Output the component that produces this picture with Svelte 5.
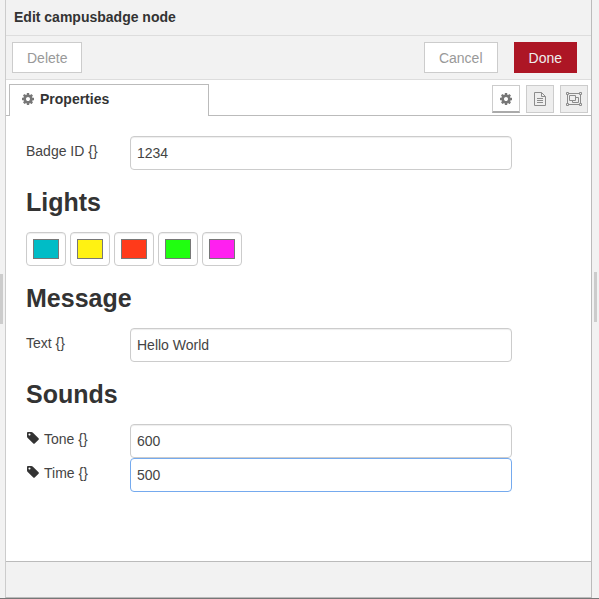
<script>
  const gear =
    'M1152 896q0-106-75-181t-181-75-181 75-75 181 75 181 181 75 181-75 75-181zm512-109v222q0 12-8 23t-20 13l-185 28q-19 54-39 91 35 50 107 138 10 12 10 25t-9 23q-27 37-99 108t-94 71q-12 0-26-9l-138-108q-44 23-91 38-16 136-29 186-7 28-36 28h-222q-14 0-24.5-8.5t-11.5-21.5l-28-184q-49-16-90-37l-141 107q-10 9-25 9-14 0-25-11-126-114-165-168-7-10-7-23 0-12 8-23 15-21 51-66.5t54-70.5q-27-50-41-99l-183-27q-13-2-21-12.5t-8-23.5v-222q0-12 8-23t19-13l186-28q14-46 39-92-40-57-107-138-10-12-10-24 0-10 9-23 26-36 98.5-107.5t94.5-71.5q13 0 26 10l138 107q44-23 91-38 16-136 29-186 7-28 36-28h222q14 0 24.5 8.5t11.5 21.5l28 184q49 16 90 37l142-107q9-9 24-9 13 0 25 10 129 119 165 170 7 8 7 22 0 12-8 23-15 21-51 66.5t-54 70.5q26 50 41 98l183 28q13 2 21 12.5t8 23.5z';
  const tag =
    'M576 448q0-53-37.5-90.5t-90.5-37.5-90.5 37.5-37.5 90.5 37.5 90.5 90.5 37.5 90.5-37.5 37.5-90.5zm1067 576q0 53-37 90l-491 492q-39 37-91 37-53 0-90-37l-715-716q-38-37-64.5-101t-26.5-117v-416q0-52 38-90t90-38h416q53 0 117 26.5t102 64.5l715 714q37 39 37 91z';

  let badgeId = $state('1234');
  let message = $state('Hello World');
  let tone = $state('600');
  let time = $state('500');
  let lights = $state(['#00bcc6', '#fff212', '#ff3a1a', '#20ff10', '#ff20f0']);
</script>

{#snippet row(id, label, icon, get, set, active)}
  <div class="form-row">
    <label for={id}>
      {#if icon}
        <svg class="tag" viewBox="0 0 1792 1792" aria-hidden="true"><path d={icon} /></svg>
      {/if}
      <span>{label}</span>
    </label>
    <input {id} type="text" class:active bind:value={get, set} />
  </div>
{/snippet}

<div class="workspace">
  <div class="separator"><i></i></div>
  <main class="tray">
    <header>Edit campusbadge node</header>
    <div class="toolbar">
      <button type="button">Delete</button>
      <div class="confirm">
        <button type="button">Cancel</button>
        <button type="button" class="primary">Done</button>
      </div>
    </div>

    <div class="tabs">
      <button type="button" class="tab">
        <svg class="cog" viewBox="0 0 1792 1792" aria-hidden="true"><path d={gear} /></svg>
        <span>Properties</span>
      </button>
      <div class="tab-tools">
        <button type="button" class="tool selected" aria-label="Properties">
          <svg class="cog" viewBox="0 0 1792 1792" aria-hidden="true"><path d={gear} /></svg>
        </button>
        <button type="button" class="tool" aria-label="Description">
          <svg class="file" viewBox="0 0 12 14" aria-hidden="true">
            <path d="M.5 .5H7.5L11.5 4.5V13.5H.5ZM7.5 .5V4.5H11.5M3 6.5H9M3 8.5H9M3 10.5H9" />
          </svg>
        </button>
        <button type="button" class="tool" aria-label="Appearance">
          <svg class="group" viewBox="0 0 16 14" aria-hidden="true">
            <path d="M3 1.5H13M3 12.5H13M1.5 3V11M14.5 3V11" />
            <path d="M.5 .5H2.5V2.5H.5ZM13.5 .5H15.5V2.5H13.5ZM.5 11.5H2.5V13.5H.5ZM13.5 11.5H15.5V13.5H13.5Z" />
            <path d="M3.5 3.5H9.5V8.5H3.5ZM9.5 5.5H12.5V10.5H6.5V8.5" />
          </svg>
        </button>
      </div>
    </div>

    <form>
      {@render row('badge-id', 'Badge ID {}', null, () => badgeId, (v) => (badgeId = v), false)}

      <h3>Lights</h3>
      <div class="lights">
        {#each lights as _, i}
          <input type="color" aria-label={`Light ${i + 1}`} bind:value={lights[i]} />
        {/each}
      </div>

      <h3>Message</h3>
      {@render row('text', 'Text {}', null, () => message, (v) => (message = v), false)}

      <h3>Sounds</h3>
      {@render row('tone', 'Tone {}', tag, () => tone, (v) => (tone = v), false)}
      {@render row('time', 'Time {}', tag, () => time, (v) => (time = v), true)}
    </form>

    <footer></footer>
  </main>
  <div class="separator right"><i></i></div>
</div>

<style>
  :global(body) {
    margin: 0;
  }

  .workspace {
    box-sizing: border-box;
    min-height: 100vh;
    display: flex;
    background: #f2f2f2;
    border-bottom: 1px solid #777;
    font: 14px/20px 'Liberation Sans', Helvetica, Arial, sans-serif;
    color: #444;
  }

  .workspace * {
    box-sizing: border-box;
  }

  .separator {
    width: 5px;
    display: flex;
    align-items: center;
  }

  .separator.right {
    width: 7px;
    padding: 0 2px 4px;
  }

  .separator i {
    width: 3px;
    height: 50px;
    background: #ccc;
  }

  .tray {
    flex: 1;
    min-width: 0;
    display: flex;
    flex-direction: column;
    border: 1px solid #bbb;
    border-top: 0;
    border-left-color: #ccc;
    background: #fff;
  }

  header {
    padding: 7px 8px 8px;
    background: #f2f2f2;
    border-bottom: 1px solid #ddd;
    font-weight: bold;
    color: #333;
  }

  .toolbar {
    display: flex;
    justify-content: space-between;
    padding: 6px 14px 6px 6px;
    background: #f2f2f2;
    border-bottom: 1px solid #ddd;
  }

  .confirm {
    display: flex;
    gap: 16px;
  }

  button {
    font: inherit;
    cursor: pointer;
  }

  .toolbar button {
    height: 31px;
    padding: 0 14px;
    border: 1px solid #ccc;
    background: #fff;
    color: #999;
  }

  .toolbar .primary {
    border-color: #ad1625;
    background: #ad1625;
    color: #eee;
  }

  .tabs {
    display: flex;
    justify-content: space-between;
    height: 36px;
    padding: 4px 3px 0;
    box-shadow: inset 0 -1px #bbb;
  }

  .tab {
    display: flex;
    align-items: center;
    gap: 5px;
    width: 200px;
    padding: 0 11px 4px;
    border: 1px solid #bbb;
    border-bottom: 0;
    background: #fff;
    font-weight: bold;
    color: #333;
  }

  .cog {
    width: 14px;
    height: 14px;
    fill: #777;
  }

  .tab-tools {
    display: flex;
    gap: 6px;
    padding-top: 1px;
  }

  .tool {
    display: flex;
    align-items: center;
    justify-content: center;
    width: 28px;
    height: 28px;
    padding: 0;
    border: 1px solid #ccc;
    background: #eee;
  }

  .tool.selected {
    border-bottom: 2px solid #aaa;
    background: #fff;
  }

  .file,
  .group {
    height: 14px;
    fill: none;
    stroke: #8c8c8c;
  }

  .file {
    width: 12px;
  }

  .group {
    width: 16px;
  }

  form {
    flex: 1;
    padding: 20px;
  }

  .form-row {
    display: flex;
  }

  label {
    display: flex;
    gap: 4px;
    width: 104px;
    padding: 5px 0;
  }

  .tag {
    width: 14px;
    height: 14px;
    margin-top: 2px;
    fill: #333;
  }

  input[type='text'] {
    width: 70%;
    height: 34px;
    padding: 0 6px;
    border: 1px solid #ccc;
    border-radius: 4px;
    background: #fff;
    box-shadow: inset 0 1px 1px #eee;
    font: inherit;
    color: #444;
    outline: none;
  }

  input[type='text'].active,
  input[type='text']:focus {
    border-color: #75aaee;
    box-shadow: none;
  }

  h3 {
    margin: 12px 0 10px;
    font-size: 25px;
    line-height: 40px;
    color: #333;
  }

  .lights {
    display: flex;
    gap: 4px;
  }

  input[type='color'] {
    appearance: none;
    width: 40px;
    height: 34px;
    padding: 6px;
    border: 1px solid #ccc;
    border-radius: 4px;
    background: #fff;
    box-shadow: inset 0 1px 1px #eee;
  }

  input[type='color']::-webkit-color-swatch-wrapper {
    padding: 0;
  }

  input[type='color']::-webkit-color-swatch {
    border: 1px solid #777;
    border-radius: 0;
  }

  footer {
    height: 36px;
    border-top: 1px solid #bbb;
    background: #f2f2f2;
  }
</style>
